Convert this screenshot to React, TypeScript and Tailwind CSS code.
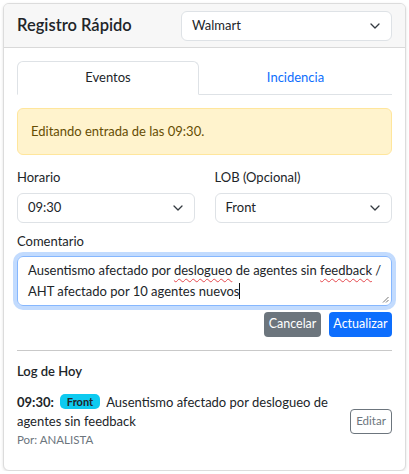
import type { ReactNode } from 'react'

function Chevron() {
  return (
    <svg width="10" height="6" viewBox="0 0 10 6" fill="none" className="shrink-0">
      <path d="M1 1l4 4 4-4" stroke="#343a40" strokeWidth="1.3" strokeLinecap="round" strokeLinejoin="round" />
    </svg>
  )
}

function FakeSelect({ value, className = '' }: { value: string; className?: string }) {
  return (
    <div className={`h-[30px] border border-[#dee2e6] rounded-[6px] bg-white flex items-center justify-between pl-[10px] pr-[11px] text-[13px] text-[#212529] ${className}`}>
      <span>{value}</span>
      <Chevron />
    </div>
  )
}

function Squiggle({ children }: { children: ReactNode }) {
  return <span className="underline decoration-wavy decoration-[#e5484d] decoration-1 underline-offset-[3px]">{children}</span>
}

export default function App() {
  return (
    <div className="px-[3px] pt-[3px] font-['Lato','Liberation_Sans',sans-serif] text-[#212529]">
      <div className="bg-white border border-[#dcdcdc] rounded-[6px] shadow-[0_1px_3px_rgba(0,0,0,0.12)] overflow-hidden">
        <div className="h-[44px] bg-[#f7f7f7] border-b border-[#d9d9d9] px-[13px] flex items-center justify-between">
          <h5 className="text-[16.5px] font-semibold leading-none">Registro Rápido</h5>
          <FakeSelect value="Walmart" className="w-[211px]" />
        </div>

        <div className="px-[13px] pt-[13px] pb-[21px]">
          <div className="flex h-[34px] border-b border-[#dee2e6] text-[13px]">
            <div className="w-[182px] -mb-px border border-[#dee2e6] border-b-white rounded-t-[6px] bg-white flex items-center justify-center">
              Eventos
            </div>
            <div className="flex-1 flex items-center justify-center text-[#0d6efd]">Incidencia</div>
          </div>

          <div className="mt-[13px] h-[47px] bg-[#fff3cd] border border-[#ffe69c] rounded-[6px] px-[13px] flex items-center text-[13px] text-[#664d03]">
            Editando entrada de las 09:30.
          </div>

          <div className="grid grid-cols-2 gap-x-[20px] mt-[12px]">
            <div>
              <label className="block text-[13px] leading-[21px] mb-[5px]">Horario</label>
              <FakeSelect value="09:30" />
            </div>
            <div>
              <label className="block text-[13px] leading-[21px] mb-[5px]">LOB (Opcional)</label>
              <FakeSelect value="Front" />
            </div>
          </div>

          <label className="block text-[13px] leading-[21px] mt-[8px] mb-[4px]">Comentario</label>
          <div className="relative h-[50px] border border-[#86b7fe] rounded-[6px] shadow-[0_0_0_4px_rgba(13,110,253,0.25)] px-[10px] pt-[3px] text-[13px] leading-[21px] whitespace-nowrap overflow-hidden">
            <div>
              Ausentismo afectado por <Squiggle>deslogueo</Squiggle> de agentes sin <Squiggle>feedback</Squiggle> /
            </div>
            <div>
              AHT afectado por 10 agentes nuevos
              <span className="inline-block w-px h-[16px] bg-[#111] align-[-3px]" />
            </div>
            <svg width="7" height="7" viewBox="0 0 7 7" className="absolute right-[2px] bottom-[2px]">
              <path d="M6.5 1L1 6.5M6.5 4L4 6.5" stroke="#777" strokeWidth="1" />
            </svg>
          </div>

          <div className="flex justify-end gap-[8px] mt-[6px]">
            <button className="w-[57px] h-[25px] rounded-[4px] bg-[#6c757d] text-white text-[12.5px]">Cancelar</button>
            <button className="w-[63px] h-[25px] rounded-[4px] bg-[#0d6efd] text-white text-[12.5px]">Actualizar</button>
          </div>

          <hr className="mt-[13px] border-t border-[#c9c9c9]" />

          <h6 className="mt-[10px] text-[13px] font-semibold leading-[21px]">Log de Hoy</h6>

          <div className="mt-[11px] flex items-center gap-[10px]">
            <div className="flex-1">
              <p className="text-[13px] leading-[19px]">
                <b className="font-bold">09:30:</b>
                <span className="inline-block ml-[6px] mr-[6px] bg-[#0dcaf0] text-[#212529] font-bold text-[11px] leading-[15px] px-[7px] rounded-[5px] align-[1px]">Front</span>
                Ausentismo afectado por deslogueo de
                <br />
                agentes sin feedback
              </p>
              <p className="text-[11.5px] leading-[18px] text-[#6c757d]">Por: ANALISTA</p>
            </div>
            <button className="w-[42px] h-[25px] border border-[#6c757d] rounded-[4px] text-[11.5px] text-[#6c757d]">Editar</button>
          </div>
        </div>
      </div>
    </div>
  )
}
